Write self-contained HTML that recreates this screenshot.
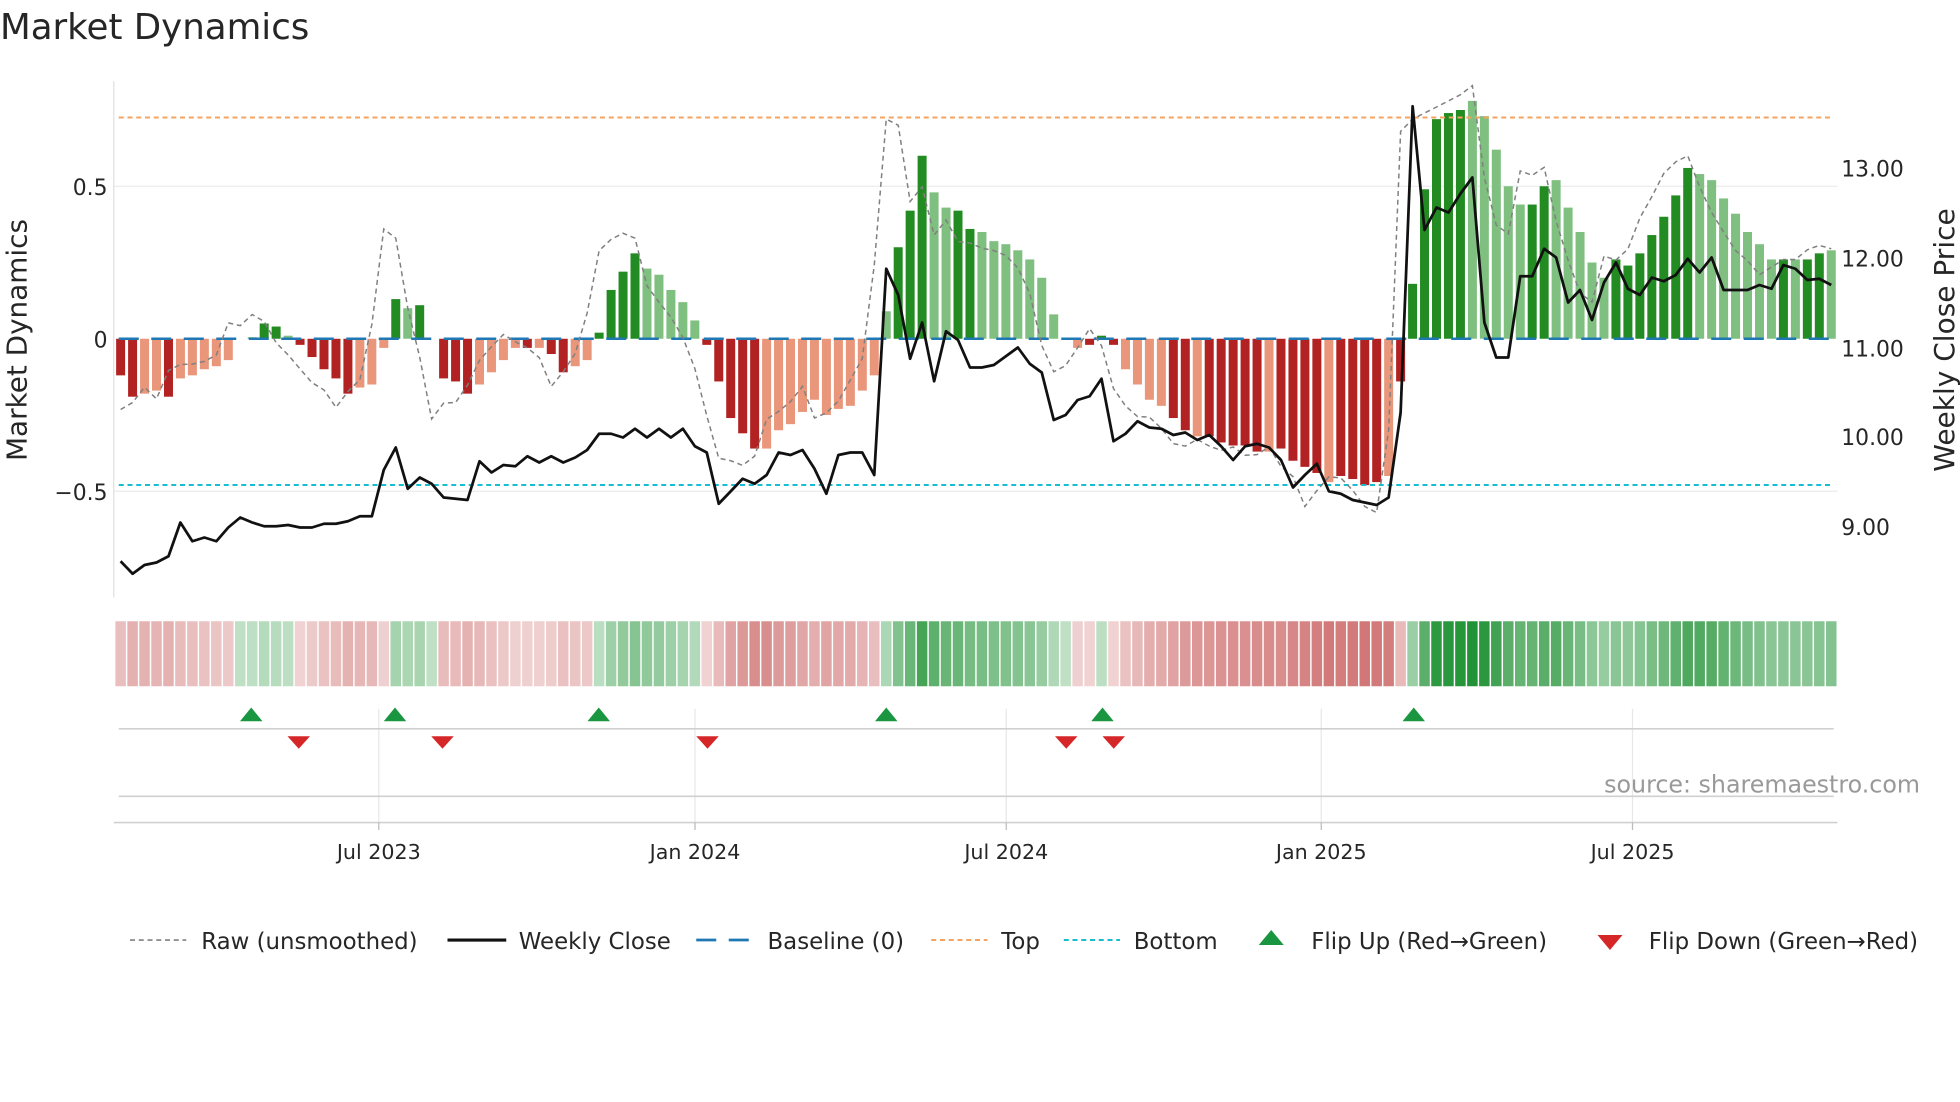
<!DOCTYPE html>
<html><head><meta charset="utf-8">
<style>
html,body{margin:0;padding:0;background:#fff;width:1960px;height:1102px;overflow:hidden}
svg{display:block}
text{font-family:"DejaVu Sans","Liberation Sans",sans-serif;fill:#262626}
</style></head>
<body>
<svg id="s" width="1960" height="1102" viewBox="0 0 1568 881.6" xmlns="http://www.w3.org/2000/svg">
<text x="0" y="31" font-size="28.5">Market Dynamics</text>
<!-- grid -->
<line x1="91" y1="149" x2="1470" y2="149" stroke="#ebebeb" stroke-width="1"/>
<line x1="91" y1="393" x2="1470" y2="393" stroke="#ebebeb" stroke-width="1"/>
<line x1="91" y1="65" x2="91" y2="478" stroke="#e0e0e0" stroke-width="1"/>
<g id="bars"></g>
<line x1="95" y1="94" x2="1465" y2="94" stroke="#f4a460" stroke-width="1.6" stroke-dasharray="4 3"/>
<line x1="95" y1="388" x2="1465" y2="388" stroke="#17becf" stroke-width="1.6" stroke-dasharray="4 3"/>
<line x1="95" y1="271" x2="1465" y2="271" stroke="#1f77b4" stroke-width="2" stroke-dasharray="16 10"/>
<polyline id="raw" fill="none" stroke="#808080" stroke-width="1.2" stroke-dasharray="4 3"/>
<polyline id="price" fill="none" stroke="#111" stroke-width="2.2" stroke-linejoin="round"/>
<g font-size="17.5">
<text x="86" y="156" text-anchor="end">0.5</text>
<text x="86" y="278" text-anchor="end">0</text>
<text x="86" y="400" text-anchor="end">−0.5</text>
<text x="1473" y="141">13.00</text>
<text x="1473" y="213">12.00</text>
<text x="1473" y="285">11.00</text>
<text x="1473" y="356">10.00</text>
<text x="1473" y="428">9.00</text>
</g>
<text transform="translate(21,272) rotate(-90)" font-size="22.3" text-anchor="middle">Market Dynamics</text>
<text transform="translate(1563,272) rotate(-90)" font-size="22.4" text-anchor="middle">Weekly Close Price</text>
<g id="heat"></g>
<!-- flip rows -->
<g stroke="#e8e8e8" stroke-width="1">
<line x1="303" y1="567" x2="303" y2="658"/><line x1="556" y1="567" x2="556" y2="658"/>
<line x1="805" y1="567" x2="805" y2="658"/><line x1="1057" y1="567" x2="1057" y2="658"/>
<line x1="1306" y1="567" x2="1306" y2="658"/>
</g>
<line x1="95" y1="583" x2="1467" y2="583" stroke="#d0d0d0" stroke-width="1.3"/>
<line x1="95" y1="637" x2="1467" y2="637" stroke="#d0d0d0" stroke-width="1.3"/>
<line x1="91" y1="658" x2="1470" y2="658" stroke="#d0d0d0" stroke-width="1.3"/>
<g stroke="#bbb" stroke-width="1">
<line x1="303" y1="658" x2="303" y2="664"/><line x1="556" y1="658" x2="556" y2="664"/>
<line x1="805" y1="658" x2="805" y2="664"/><line x1="1057" y1="658" x2="1057" y2="664"/>
<line x1="1306" y1="658" x2="1306" y2="664"/>
</g>
<g id="flips"></g>
<text x="1536" y="634" font-size="19" text-anchor="end" style="fill:#999">source: sharemaestro.com</text>
<g font-size="16.5" text-anchor="middle">
<text x="303" y="687">Jul 2023</text><text x="556" y="687">Jan 2024</text>
<text x="805" y="687">Jul 2024</text><text x="1057" y="687">Jan 2025</text>
<text x="1306" y="687">Jul 2025</text>
</g>
<!-- legend -->
<g font-size="18.3">
<line x1="104" y1="752" x2="149" y2="752" stroke="#808080" stroke-width="1.3" stroke-dasharray="4 3"/>
<text x="161" y="759">Raw (unsmoothed)</text>
<line x1="358" y1="752" x2="405" y2="752" stroke="#111" stroke-width="2.5"/>
<text x="415" y="759">Weekly Close</text>
<line x1="557" y1="752" x2="603" y2="752" stroke="#1f77b4" stroke-width="2.2" stroke-dasharray="16 10"/>
<text x="614" y="759">Baseline (0)</text>
<line x1="745" y1="752" x2="790" y2="752" stroke="#f4a460" stroke-width="1.6" stroke-dasharray="4 3"/>
<text x="801" y="759">Top</text>
<line x1="851" y1="752" x2="896" y2="752" stroke="#17becf" stroke-width="1.6" stroke-dasharray="4 3"/>
<text x="907" y="759">Bottom</text>
<polygon points="1017,744 1027,756 1007,756" fill="#1a9641"/>
<text x="1049" y="759">Flip Up (Red→Green)</text>
<polygon points="1278,748 1298,748 1288,760" fill="#d62728"/>
<text x="1319" y="759">Flip Down (Green→Red)</text>
</g>
</svg>
<script>
var NS="http://www.w3.org/2000/svg";
var V=[-.12,-.19,-.18,-.17,-.19,-.13,-.12,-.10,-.09,-.07,0,.005,.05,.04,.01,-.02,-.06,-.10,-.13,-.18,-.16,-.15,-.03,.13,.10,.11,0,-.13,-.14,-.18,-.15,-.11,-.07,-.03,-.03,-.03,-.05,-.11,-.09,-.07,.02,.16,.22,.28,.23,.21,.16,.12,.06,-.02,-.14,-.26,-.31,-.36,-.36,-.30,-.28,-.24,-.20,-.25,-.23,-.22,-.17,-.12,.09,.30,.42,.60,.48,.43,.42,.36,.35,.32,.31,.29,.26,.20,.08,0,-.03,-.02,.01,-.02,-.10,-.15,-.20,-.22,-.26,-.30,-.32,-.32,-.34,-.35,-.35,-.37,-.37,-.36,-.40,-.42,-.44,-.47,-.45,-.46,-.48,-.47,-.45,-.14,.18,.49,.72,.74,.75,.78,.73,.62,.50,.44,.44,.50,.52,.43,.35,.25,.20,.26,.24,.28,.34,.40,.47,.56,.54,.52,.46,.41,.35,.31,.26,.26,.26,.26,.28,.29];
var D="DDLLDLLLLL-LDDLDDDDDLLLDLD-DDDLLLLDLDDLLDDDDLLLLLDDDDDLLLLLLLLLLLDDDLLDDLLLLLL-DLDDDLLLLDDLDDDDDLDDDDLDDDDLDDDDDDLLLLLDDLLLLLDDDDDDDLLLLLLLDLDD";
var P=[449,459,452,450,445,418,433,430,433,422,414,418,421,421,420,422,422,419,419,417,413,413,376,358,391,382,387,398,399,400,369,378,372,373,365,370,365,370,366,360,347,347,350,343,350,343,350,343,357,362,403,393,383,387,380,362,364,360,375,395,364,362,362,380,215,236,287,258,305,265,272,294,294,292,285,278,291,298,336,332,320,317,303,353,347,337,342,343,348,346,352,348,357,368,357,355,358,368,390,380,371,393,395,400,402,404,398,330,85,184,166,170,155,142,258,286,286,221,221,199,206,242,232,256,226,210,231,236,222,225,220,207,218,206,232,232,232,228,231,212,215,224,223,228];
var n=V.length,sp=9.57,x0=96.5,Y0=271,K=244;
var bars=document.getElementById("bars"),heat=document.getElementById("heat");
function el(t,a,p){var e=document.createElementNS(NS,t);for(var k in a)e.setAttribute(k,a[k]);p.appendChild(e);return e;}
function mix(c,t){return "rgb("+c.map(function(v){return Math.round(255+(v-255)*t)}).join(",")+")";}
var raw=[];
for(var i=0;i<n;i++){
 var v=V[i],x=x0+i*sp,h=Math.abs(v)*K,d=D[i]||"L";
 var col=v>=0?(d=="D"?"#228b22":"#7fbf7f"):(d=="D"?"#b22222":"#e9967a");
 if(h>0.5) el("rect",{x:x-3.6,y:v>=0?Y0-h:Y0,width:7.2,height:h,fill:col},bars);
 var t,c;
 if(v>=0){t=0.3+0.75*Math.min(v/.8,1);c=[40,150,60];}else{t=0.25+0.6*Math.min(-v/.5,1);c=[200,90,90];}
 el("rect",{x:x-4.2,y:497,width:8.4,height:52,fill:mix(c,t)},heat);
 var nx=i+1<n?V[i+1]:v, pv=i>0?V[i-1]:v;
 raw.push(v+1.6*(nx-v)+0.5*(v-pv));
}
var over={22:.36,23:.33,43:.33,64:.72,65:.70,66:.45,105:-.57,104:-.55,106:-.3,107:.68,108:.72,109:.74,110:.76,111:.78,112:.80,113:.83,117:.55,131:.6,130:.58,99:-.55};
var pts=[],pp=[];
for(i=0;i<n;i++){var r=over[i]!==undefined?over[i]:raw[i];pts.push((x0+i*sp).toFixed(1)+","+(Y0-r*K).toFixed(1));pp.push((x0+i*sp).toFixed(1)+","+(P[i]||228));}
document.getElementById("raw").setAttribute("points",pts.join(" "));
document.getElementById("price").setAttribute("points",pp.join(" "));
var f=document.getElementById("flips");
[201,316,479,709,882,1131].forEach(function(x){el("polygon",{points:x+",566 "+(x+9)+",577 "+(x-9)+",577",fill:"#1a9641"},f);});
[239,354,566,853,891].forEach(function(x){el("polygon",{points:(x-9)+",589 "+(x+9)+",589 "+x+",599",fill:"#d62728"},f);});
</script>
</body></html>
